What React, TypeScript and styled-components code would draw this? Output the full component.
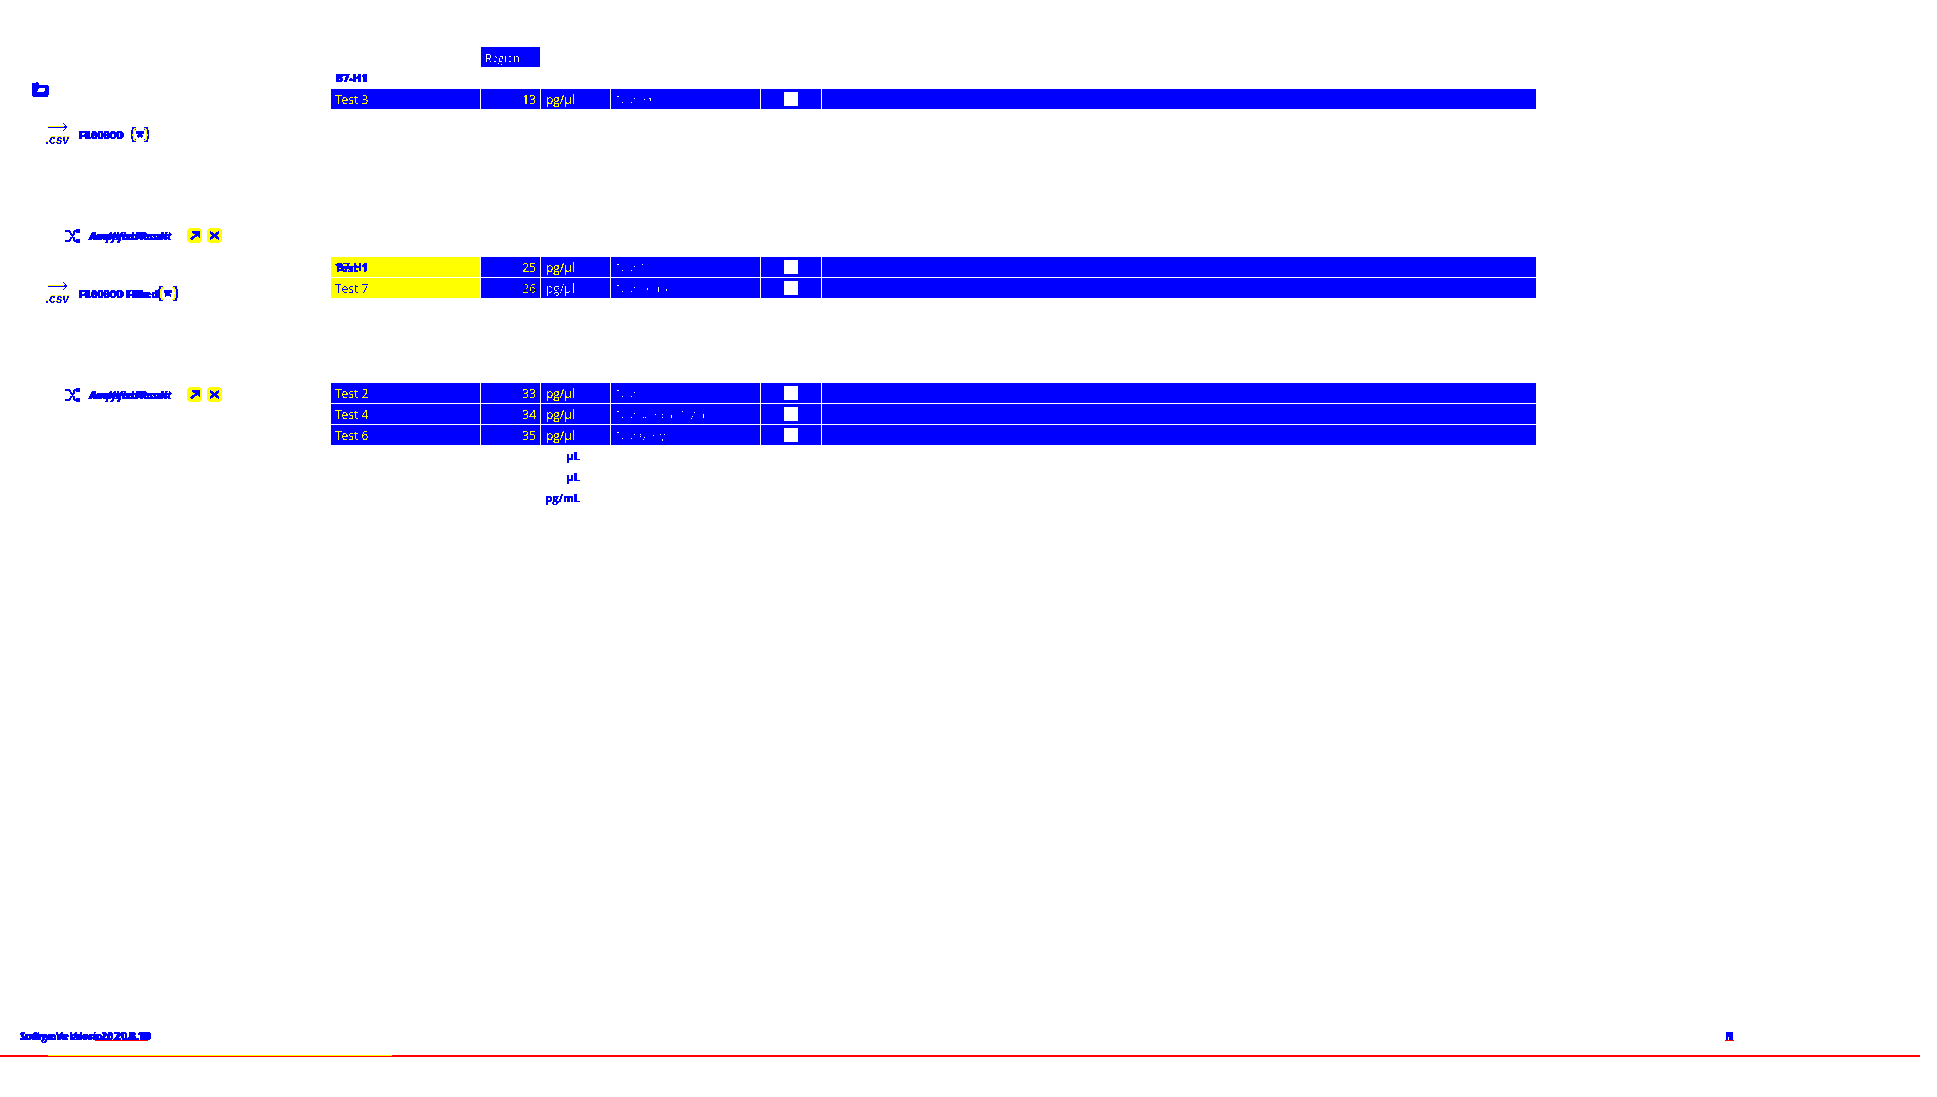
import React from 'react';
import styled, { createGlobalStyle } from 'styled-components';

const BLUE = '#0000ff';
const YELLOW = '#ffff00';

const GlobalStyle = createGlobalStyle`
  html, body {
    margin: 0;
    padding: 0;
    background: #fff;
  }
  body {
    font-family: "Open Sans", "Liberation Sans", sans-serif;
    font-size: 12px;
    color: ${BLUE};
  }
`;

const Page = styled.div`
  width: 1937px;
  height: 1097px;
  display: flex;
  flex-direction: column;
  overflow: hidden;
  background: #fff;
  filter: url(#hard-edges);
`;

const HiddenDefs = styled.svg`
  position: absolute;
  width: 0;
  height: 0;
`;

const Main = styled.main`
  flex: 0 0 1029px;
  display: flex;
  padding-top: 47px;
  box-sizing: border-box;
`;

const Sidebar = styled.aside`
  flex: 0 0 331px;
  display: flex;
  flex-direction: column;
`;

const FolderRow = styled.div`
  display: flex;
  padding: 35px 0 0 32px;
  height: 15px;
`;

const FileRow = styled.div<{ $top: number }>`
  display: flex;
  align-items: center;
  gap: 9px;
  margin: ${(p) => p.$top}px 0 0 46px;
  height: 23px;
`;

const CsvIcon = styled.div`
  width: 23px;
  height: 23px;
  display: flex;
  flex-direction: column;
  align-items: flex-end;
`;

const CsvLabel = styled.span`
  font: italic bold 12px/11px "Liberation Sans", sans-serif;
  color: ${BLUE};
  text-shadow: 0 -1px 0 ${YELLOW};
  margin-top: 3px;
`;

const Bold = styled.span<{ $over: string }>`
  position: relative;
  font-weight: 700;
  font-size: 11px;
  line-height: 14px;
  white-space: nowrap;
  -webkit-text-stroke: 0.4px ${BLUE};
  &::after {
    content: '${(p) => p.$over}';
    position: absolute;
    left: 1px;
    top: 0;
  }
`;

const ResultRow = styled.div<{ $top: number }>`
  display: flex;
  align-items: center;
  margin: ${(p) => p.$top}px 0 0 65px;
  height: 15px;
`;

const ResultLabel = styled(Bold)`
  margin-left: 9px;
  width: 98px;
  font-size: 10.500px;
  font-style: italic;
`;

const ActionButton = styled.button`
  width: 15px;
  height: 15px;
  padding: 0;
  margin-right: 5px;
  border: 0;
  border-radius: 4px;
  background: ${YELLOW};
  display: flex;
  align-items: center;
  justify-content: center;
`;

const Table = styled.section`
  display: grid;
  grid-template-columns: 149px 59px 69px 149px 60px 714px;
  grid-auto-rows: 20px;
  column-gap: 1px;
  row-gap: 1px;
  align-content: start;
`;

const Spacer = styled.div<{ $rows: number }>`
  grid-column: 1 / -1;
  grid-row: span ${(p) => p.$rows};
`;

const Cell = styled.div<{ $hl?: boolean; $right?: boolean; $pad?: number; $ink?: string }>`
  background: ${(p) => (p.$hl ? YELLOW : BLUE)};
  color: ${(p) => p.$ink ?? (p.$hl ? BLUE : YELLOW)};
  line-height: 21px;
  padding: 0 4px 0 ${(p) => p.$pad ?? 4}px;
  text-align: ${(p) => (p.$right ? 'right' : 'left')};
  white-space: nowrap;
  overflow: hidden;
  position: relative;
`;

const NameCell = styled(Cell)`
  grid-column: 1;
`;

const FaintCell = styled(Cell)`
  color: #9494ff;
  font-size: 11px;
`;

const CheckCell = styled(Cell)`
  display: flex;
  align-items: center;
  justify-content: center;
  padding: 0;
`;

const Check = styled.span`
  width: 14px;
  height: 14px;
  background: #fff;
  display: block;
`;

const HeadCell = styled(FaintCell)`
  grid-column: 2;
  color: #a8a8ff;
`;

const GroupTitle = styled(Bold)`
  grid-column: 1;
  padding-left: 4px;
  line-height: 20px;
  &::after {
    left: 5px;
  }
`;

const CellTitle = styled(Bold)`
  font-size: 11px;
`;

const UnitNote = styled.div`
  grid-column: 3;
  font-weight: 700;
  font-size: 11px;
  line-height: 20px;
  text-align: right;
  padding-right: 30px;
  white-space: nowrap;
  -webkit-text-stroke: 0.4px ${BLUE};
`;

const FooterBar = styled.footer`
  display: flex;
  justify-content: space-between;
  height: 14px;
  padding: 0 203px 0 20px;
`;

const FooterLabel = styled(Bold)`
  font-size: 10.500px;
  &::before {
    content: '';
    position: absolute;
    left: 75px;
    width: 53px;
    height: 1px;
    bottom: 2px;
    background: #ff0000;
  }
`;

const FooterMark = styled(Bold)`
  &::before {
    content: '';
    position: absolute;
    left: 0;
    right: 0;
    height: 1px;
    bottom: 2px;
    background: #ff0000;
  }
`;

const RedLine = styled.div`
  width: 1920px;
  height: 2px;
  margin-top: 12px;
  background: #ff0000;
  display: flex;
  padding-left: 48px;
  box-sizing: border-box;
`;

const YellowPart = styled.div`
  width: 344px;
  height: 1px;
  background: ${YELLOW};
`;

const Folder = () => (
  <svg width="17" height="15" viewBox="0 0 20 15" preserveAspectRatio="none">
    <path fill={BLUE} fillRule="evenodd" d="M1 1h3l1-1 3 1 1 2h9l2 2v7l-2 3H2l-2-2V2zM8 6 6 10h8l2-4z" />
  </svg>
);

const Arrow = () => (
  <svg width="21" height="9" viewBox="0 0 21 9">
    <path d="M0 4h19M15 0l4 4-4 4" fill="none" stroke={BLUE} strokeWidth="1.400" />
    <path d="M0 3h16" stroke={YELLOW} strokeWidth="1" />
  </svg>
);

const VarIcon = ({ wide }: { wide?: boolean }) => (
  <svg width={wide ? 20 : 18} height="15" viewBox="0 0 18 15" preserveAspectRatio="none">
    <path d="M5 1H3Q0 7.500 3 14h2M13 1h2q3 6.500 0 13h-2" fill="none" stroke={BLUE} strokeWidth="3.600" />
    <path d="M5 1.500H3.500Q1 7.500 3.500 13.500H5M13 1.500h1.500q2.500 6 0 12H13" fill="none" stroke={YELLOW} strokeWidth="1.600" />
    <path d="M5 4h8v2.500h-2l1 4h-2L9 9l-1 1.500H6l1-4H5z" fill={BLUE} />
  </svg>
);

const Shuffle = () => (
  <svg width="15" height="14" viewBox="0 0 15 14">
    <path d="M0 2h4l2 2M0 12h4l2-2M11 2H9.500L8.500 4M11 12H9.500l-1-2M5 4l5 6M10 4 5 10" fill="none" stroke={BLUE} strokeWidth="2" />
    <path d="M11 0h4v4h-4zM11 10h4v4h-4z" fill={BLUE} />
  </svg>
);

const OpenIcon = () => (
  <svg width="11" height="9" viewBox="0 0 11 9">
    <path d="M3 0h8v7L8.500 5 3 9 1 7l5-3.500L3 2z" fill={BLUE} />
  </svg>
);

const CloseIcon = () => (
  <svg width="11" height="9" viewBox="0 0 11 9">
    <path d="M1 1l9 7M10 1L1 8" stroke={BLUE} strokeWidth="2.500" />
  </svg>
);

const FileEntry = ({ top, name, over, wide }: { top: number; name: string; over: string; wide?: boolean }) => (
  <FileRow $top={top}>
    <CsvIcon>
      <Arrow />
      <CsvLabel>.csv</CsvLabel>
    </CsvIcon>
    <Bold $over={over}>{name}</Bold>
    <VarIcon wide={wide} />
  </FileRow>
);

const ResultEntry = ({ top }: { top: number }) => (
  <ResultRow $top={top}>
    <Shuffle />
    <ResultLabel $over="Amplified Result">Analyzed Result</ResultLabel>
    <ActionButton><OpenIcon /></ActionButton>
    <ActionButton><CloseIcon /></ActionButton>
  </ResultRow>
);

type RowData = {
  name: string;
  value: number;
  unit: string;
  note: string;
  over?: string;
  hl?: boolean;
  dim?: boolean;
};

const DataRow = ({ row }: { row: RowData }) => (
  <>
    <NameCell $hl={row.hl}>
      {row.over ? <CellTitle $over={row.over}>{row.name}</CellTitle> : row.name}
    </NameCell>
    <Cell $right $ink={row.dim ? '#a8a800' : undefined}>{row.value}</Cell>
    <Cell $pad={5} $ink={row.dim ? '#b8b890' : undefined}>{row.unit}</Cell>
    <FaintCell>{row.note}</FaintCell>
    <CheckCell><Check /></CheckCell>
    <Cell />
  </>
);

const groupOne: RowData[] = [{ name: 'Test 3', value: 13, unit: 'pg/µl', note: 'Testing' }];
const groupTwo: RowData[] = [
  { name: 'Test 1', value: 25, unit: 'pg/µl', note: 'Test 1', over: 'B7-H1', hl: true },
  { name: 'Test 7', value: 26, unit: 'pg/µl', note: 'Test protoc', hl: true, dim: true },
];
const groupThree: RowData[] = [
  { name: 'Test 2', value: 33, unit: 'pg/µl', note: 'Test' },
  { name: 'Test 4', value: 34, unit: 'pg/µl', note: 'Test sample 1/2 a' },
  { name: 'Test 6', value: 35, unit: 'pg/µl', note: 'Test 6 dry' },
];

export default function App() {
  return (
    <Page>
      <GlobalStyle />
      <HiddenDefs aria-hidden="true">
        <filter id="hard-edges" colorInterpolationFilters="sRGB" x="0" y="0" width="100%" height="100%">
          <feComponentTransfer>
            <feFuncR type="discrete" tableValues="0 1" />
            <feFuncG type="discrete" tableValues="0 1" />
            <feFuncB type="discrete" tableValues="0 1" />
          </feComponentTransfer>
        </filter>
      </HiddenDefs>
      <Main>
        <Sidebar>
          <FolderRow><Folder /></FolderRow>
          <FileEntry top={26} name="File0000" over="FL00S0D" />
          <ResultEntry top={82} />
          <FileEntry top={39} name="File0000 Filte" over="FL00S0D Filted" wide />
          <ResultEntry top={82} />
        </Sidebar>
        <Table>
          <HeadCell>Region</HeadCell>
          <GroupTitle $over="B7-H1">B7-H1</GroupTitle>
          {groupOne.map((r) => <DataRow key={r.name} row={r} />)}
          <Spacer $rows={7} />
          {groupTwo.map((r) => <DataRow key={r.name} row={r} />)}
          <Spacer $rows={4} />
          {groupThree.map((r) => <DataRow key={r.name} row={r} />)}
          <UnitNote>µL</UnitNote>
          <UnitNote>µL</UnitNote>
          <UnitNote>pg/mL</UnitNote>
        </Table>
      </Main>
      <FooterBar>
        <FooterLabel $over="Image Version: 2021.8.10">Software Version: 20.8.10</FooterLabel>
        <FooterMark $over="1">N</FooterMark>
      </FooterBar>
      <RedLine><YellowPart /></RedLine>
    </Page>
  );
}
